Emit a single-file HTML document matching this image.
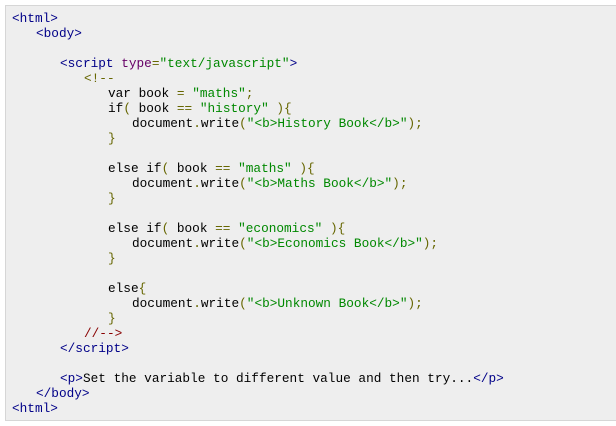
<!DOCTYPE html><html><head><style>
body{margin:0;background:#fff;width:616px;height:426px;overflow:hidden}
.box{position:absolute;left:5px;top:5px;width:640px;height:416px;margin:0;background:#eee;border:1px solid #d6d6d6;box-sizing:border-box;padding:5px 0 0 6px;font-family:"Liberation Mono",monospace;font-size:12.75px;line-height:15px;color:#000}
.box div{height:15px;white-space:pre}
.l1{padding-left:24px}.l2{padding-left:48px}.l3{padding-left:72px}.l4{padding-left:96px}.l5{padding-left:120px}
.t{color:#000088}.a{color:#660066}.s{color:#008800}.p{color:#666600}.c{color:#880000}
</style></head><body><div class="box">
<div><span class="t">&lt;html&gt;</span></div>
<div class="l1"><span class="t">&lt;body&gt;</span></div>
<div></div>
<div class="l2"><span class="t">&lt;script</span> <span class="a">type</span><span class="p">=</span><span class="s">"text/javascript"</span><span class="t">&gt;</span></div>
<div class="l3"><span class="p">&lt;!--</span></div>
<div class="l4">var book <span class="p">=</span> <span class="s">"maths"</span><span class="p">;</span></div>
<div class="l4">if<span class="p">(</span> book <span class="p">==</span> <span class="s">"history"</span> <span class="p">){</span></div>
<div class="l5">document<span class="p">.</span>write<span class="p">(</span><span class="s">"&lt;b&gt;History Book&lt;/b&gt;"</span><span class="p">);</span></div>
<div class="l4"><span class="p">}</span></div>
<div></div>
<div class="l4">else if<span class="p">(</span> book <span class="p">==</span> <span class="s">"maths"</span> <span class="p">){</span></div>
<div class="l5">document<span class="p">.</span>write<span class="p">(</span><span class="s">"&lt;b&gt;Maths Book&lt;/b&gt;"</span><span class="p">);</span></div>
<div class="l4"><span class="p">}</span></div>
<div></div>
<div class="l4">else if<span class="p">(</span> book <span class="p">==</span> <span class="s">"economics"</span> <span class="p">){</span></div>
<div class="l5">document<span class="p">.</span>write<span class="p">(</span><span class="s">"&lt;b&gt;Economics Book&lt;/b&gt;"</span><span class="p">);</span></div>
<div class="l4"><span class="p">}</span></div>
<div></div>
<div class="l4">else<span class="p">{</span></div>
<div class="l5">document<span class="p">.</span>write<span class="p">(</span><span class="s">"&lt;b&gt;Unknown Book&lt;/b&gt;"</span><span class="p">);</span></div>
<div class="l4"><span class="p">}</span></div>
<div class="l3"><span class="c">//--&gt;</span></div>
<div class="l2"><span class="t">&lt;/script&gt;</span></div>
<div></div>
<div class="l2"><span class="t">&lt;p&gt;</span>Set the variable to different value and then try...<span class="t">&lt;/p&gt;</span></div>
<div class="l1"><span class="t">&lt;/body&gt;</span></div>
<div><span class="t">&lt;html&gt;</span></div>
</div></body></html>
